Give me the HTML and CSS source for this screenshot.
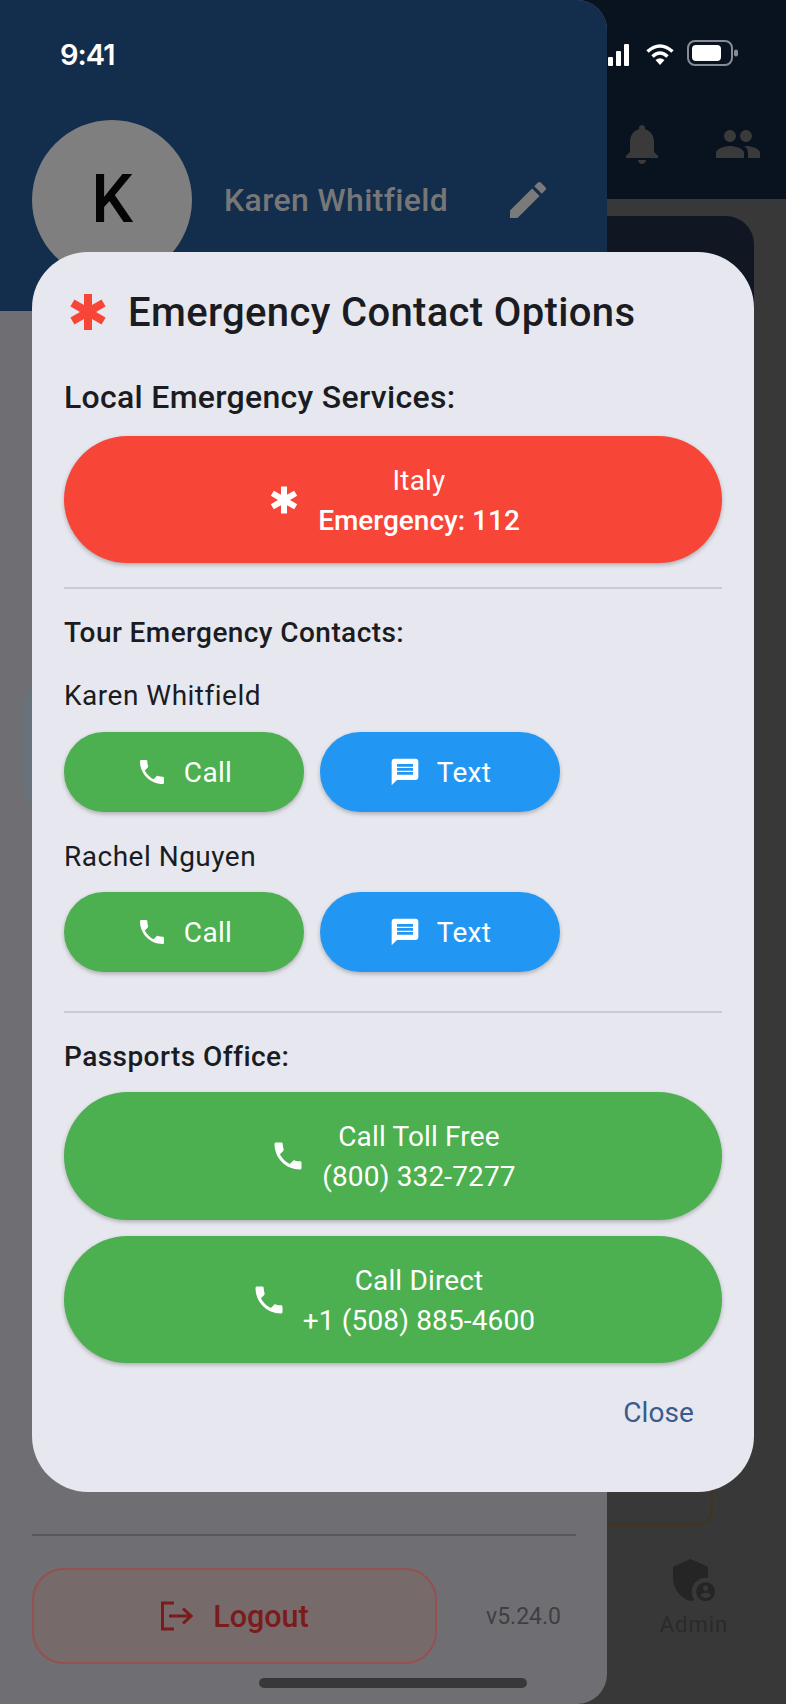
FILE: index.html
```html
<!DOCTYPE html>
<html lang="en">
<head>
<meta charset="utf-8">
<title>Emergency Contact Options</title>
<link rel="stylesheet" href="styles.css">
</head>
<body>
<div class="screen">
  <div class="app">
    <header class="appbar">
      <svg class="bar-icon" viewBox="0 0 24 24"><path d="M12 22c1.1 0 2-.9 2-2h-4c0 1.1.89 2 2 2zm6-6v-5c0-3.07-1.64-5.64-4.5-6.32V4c0-.83-.67-1.5-1.5-1.5s-1.5.67-1.5 1.5v.68C7.63 5.36 6 7.92 6 11v5l-2 2v1h16v-1l-2-2z"/></svg>
      <svg class="bar-icon" viewBox="0 0 24 24"><path d="M16 11c1.66 0 2.99-1.34 2.99-3S17.66 5 16 5c-1.66 0-3 1.34-3 3s1.34 3 3 3zm-8 0c1.66 0 2.99-1.34 2.99-3S9.66 5 8 5C6.34 5 5 6.34 5 8s1.34 3 3 3zm0 2c-2.33 0-7 1.17-7 3.5V19h14v-2.5c0-2.33-4.67-3.5-7-3.5zm8 0c-.29 0-.62.02-.97.05 1.16.84 1.97 1.97 1.97 3.45V19h6v-2.5c0-2.33-4.67-3.5-7-3.5z"/></svg>
    </header>
    <main class="app-body">
      <div class="panel">
        <div class="card-top"></div>
        <div class="card-gold"></div>
      </div>
      <nav class="nav-item">
        <svg class="admin-icon" viewBox="0 0 24 24"><path d="M17,11c0.34,0,0.67,0.04,1,0.09V6.27L10.5,3L3,6.27v4.91c0,4.54,3.2,8.79,7.5,9.82c0.55-0.13,1.08-0.32,1.6-0.55C11.41,19.47,11,18.28,11,17C11,13.69,13.69,11,17,11z"/><path d="M17,13c-2.21,0-4,1.79-4,4c0,2.21,1.79,4,4,4s4-1.79,4-4C21,14.79,19.21,13,17,13z M17,14.38c0.62,0,1.12,0.51,1.12,1.12s-0.51,1.12-1.12,1.12s-1.12-0.51-1.12-1.12S16.38,14.38,17,14.38z M17,19.75c-0.93,0-1.74-0.46-2.24-1.17c0.05-0.72,1.51-1.08,2.24-1.08s2.19,0.36,2.24,1.08C18.74,19.29,17.93,19.75,17,19.75z" fill-rule="evenodd"/></svg>
        <span class="admin-label">Admin</span>
      </nav>
    </main>
  </div>

  <aside class="drawer">
    <div class="drawer-head">
      <div class="avatar">K</div>
      <span class="drawer-name">Karen Whitfield</span>
      <svg class="edit-icon" viewBox="0 0 24 24"><path d="M3 17.25V21h3.75L17.81 9.94l-3.75-3.75L3 17.25zM20.71 7.04c.39-.39.39-1.02 0-1.41l-2.34-2.34c-.39-.39-1.02-.39-1.41 0l-1.83 1.83 3.75 3.75 1.83-1.83z"/></svg>
    </div>
    <div class="drawer-body">
      <div class="drawer-card"></div>
      <div class="drawer-foot">
        <div class="drawer-rule"></div>
        <div class="logout-row">
          <div class="logout">
            <svg class="logout-icon" viewBox="0 0 33 30"><path d="M14 2H2.500v26H14"/><path d="M9 15h22M23 7.500l8 7.500-8 7.500"/></svg>
            <span>Logout</span>
          </div>
          <span class="version">v5.24.0</span>
        </div>
      </div>
    </div>
  </aside>

  <div class="statusbar">
    <span class="clock">9:41</span>
    <div class="status-icons">
      <svg class="signal" viewBox="0 0 21 22"><rect x="0" y="13" width="5" height="9" rx="1"/><rect x="8" y="7" width="5" height="15" rx="1"/><rect x="16" y="0" width="5" height="22" rx="1"/></svg>
      <svg class="wifi" viewBox="0 0 28 21"><path class="wifi-arc" d="M1.500 7.500Q14-3.500 26.500 7.500"/><path class="wifi-arc" d="M6.500 12.500Q14 5.500 21.500 12.500"/><path class="wifi-dot" d="M9.500 16Q14 12.500 18.500 16L14 21z"/></svg>
      <svg class="battery" viewBox="0 0 51 26"><rect class="battery-shell" x="1" y="1" width="44" height="24" rx="7"/><rect class="battery-level" x="5" y="5" width="29" height="16" rx="4"/><rect class="battery-nub" x="47" y="9.500" width="4" height="7" rx="2"/></svg>
    </div>
  </div>

  <section class="dialog">
    <div class="dialog-title">
      <svg class="title-icon" viewBox="0 0 24 24"><path d="M20.79,9.23l-2-3.46L14,8.54V3h-4v5.54L5.21,5.770l-2,3.460L8,12l-4.790,2.770l2,3.460L10,15.460V21h4v-5.540l4.790,2.770l2-3.460L16,12L20.790,9.230z"/></svg>
      <h1>Emergency Contact Options</h1>
    </div>

    <h2 class="section-a">Local Emergency Services:</h2>
    <div class="wide-btn red gap-19">
      <svg class="wide-icon" viewBox="0 0 24 24"><path d="M20.79,9.23l-2-3.46L14,8.54V3h-4v5.54L5.21,5.770l-2,3.460L8,12l-4.790,2.770l2,3.460L10,15.460V21h4v-5.540l4.790,2.770l2-3.460L16,12L20.790,9.230z"/></svg>
      <div class="wide-text"><span>Italy</span><span class="strong">Emergency: 112</span></div>
    </div>

    <div class="rule rule-a"></div>

    <h3 class="section-b">Tour Emergency Contacts:</h3>
    <p class="person person-a">Karen Whitfield</p>
    <div class="pair pair-a">
      <div class="small-btn green">
        <svg class="small-icon" viewBox="0 0 24 24"><path d="M6.620 10.790c1.440 2.830 3.760 5.140 6.590 6.590l2.200-2.200c.27-.27.67-.36 1.020-.24 1.120.37 2.330.57 3.570.57.55 0 1 .45 1 1V20c0 .55-.45 1-1 1-9.390 0-17-7.610-17-17 0-.55.45-1 1-1h3.500c.55 0 1 .45 1 1 0 1.250.2 2.450.57 3.570.11.35.03.74-.25 1.020l-2.200 2.200z"/></svg>
        <span>Call</span>
      </div>
      <div class="small-btn blue">
        <svg class="small-icon" viewBox="0 0 24 24"><path d="M20 2H4c-1.100 0-1.990.9-1.990 2L2 22l4-4h14c1.100 0 2-.9 2-2V4c0-1.100-.9-2-2-2zm-2 12H6v-2h12v2zm0-3H6V9h12v2zm0-3H6V6h12v2z"/></svg>
        <span>Text</span>
      </div>
    </div>
    <p class="person person-b">Rachel Nguyen</p>
    <div class="pair pair-b">
      <div class="small-btn green">
        <svg class="small-icon" viewBox="0 0 24 24"><path d="M6.620 10.790c1.440 2.830 3.760 5.140 6.590 6.590l2.200-2.200c.27-.27.67-.36 1.020-.24 1.120.37 2.330.57 3.570.57.55 0 1 .45 1 1V20c0 .55-.45 1-1 1-9.390 0-17-7.610-17-17 0-.55.45-1 1-1h3.500c.55 0 1 .45 1 1 0 1.250.2 2.450.57 3.570.11.35.03.74-.25 1.020l-2.200 2.200z"/></svg>
        <span>Call</span>
      </div>
      <div class="small-btn blue">
        <svg class="small-icon" viewBox="0 0 24 24"><path d="M20 2H4c-1.100 0-1.990.9-1.990 2L2 22l4-4h14c1.100 0 2-.9 2-2V4c0-1.100-.9-2-2-2zm-2 12H6v-2h12v2zm0-3H6V9h12v2zm0-3H6V6h12v2z"/></svg>
        <span>Text</span>
      </div>
    </div>

    <div class="rule rule-b"></div>

    <h3 class="section-c">Passports Office:</h3>
    <div class="wide-btn green gap-15 tall">
      <svg class="wide-icon" viewBox="0 0 24 24"><path d="M6.620 10.790c1.440 2.830 3.760 5.140 6.590 6.590l2.200-2.200c.27-.27.67-.36 1.020-.24 1.120.37 2.330.57 3.570.57.55 0 1 .45 1 1V20c0 .55-.45 1-1 1-9.390 0-17-7.610-17-17 0-.55.45-1 1-1h3.500c.55 0 1 .45 1 1 0 1.250.2 2.450.57 3.570.11.35.03.74-.25 1.020l-2.200 2.200z"/></svg>
      <div class="wide-text"><span>Call Toll Free</span><span>(800) 332-7277</span></div>
    </div>
    <div class="wide-btn green gap-16">
      <svg class="wide-icon" viewBox="0 0 24 24"><path d="M6.620 10.790c1.440 2.830 3.760 5.140 6.590 6.590l2.200-2.200c.27-.27.67-.36 1.020-.24 1.120.37 2.330.57 3.570.57.55 0 1 .45 1 1V20c0 .55-.45 1-1 1-9.390 0-17-7.610-17-17 0-.55.45-1 1-1h3.500c.55 0 1 .45 1 1 0 1.250.2 2.450.57 3.570.11.35.03.74-.25 1.020l-2.200 2.200z"/></svg>
      <div class="wide-text"><span>Call Direct</span><span>+1 (508) 885-4600</span></div>
    </div>

    <div class="dialog-actions"><span class="close">Close</span></div>
  </section>

  <div class="home-indicator"></div>
</div>
</body>
</html>
```

FILE: styles.css
```css
* { box-sizing: border-box; }

html, body {
  margin: 0;
  padding: 0;
  background: #383839;
}

.screen {
  position: relative;
  width: 786px;
  height: 1704px;
  overflow: hidden;
  background: #383839;
  font-family: Roboto, "Liberation Sans", sans-serif;
}

/* dimmed page behind the drawer */
.app { display: flex; flex-direction: column; height: 100%; }

.appbar {
  height: 199px;
  flex: none;
  background: #08131f;
  display: flex;
  justify-content: flex-end;
  align-items: flex-start;
  gap: 48px;
  padding: 120px 24px 0 0;
}

.bar-icon { width: 48px; height: 48px; fill: #3a3a3b; }

.app-body { display: flex; flex-direction: column; align-items: flex-end; padding-top: 17px; }

.panel {
  width: 365px;
  height: 1326px;
  margin-right: 39px;
  display: flex;
  flex-direction: column;
  justify-content: space-between;
  padding-bottom: 17px;
  border-right: 1px solid #3a3a3b;
}

.card-top {
  width: 372px;
  height: 700px;
  background: #111722;
  border-radius: 28px;
}

.card-gold {
  width: 331px;
  height: 160px;
  border: 2px solid #46331b;
  border-radius: 16px;
}

.nav-item {
  width: 120px;
  margin: 10px 32px 0 0;
  display: flex;
  flex-direction: column;
  align-items: center;
}

.admin-icon { width: 56px; height: 56px; fill: #252526; }

.admin-label { font-size: 22px; line-height: 28px; letter-spacing: 1px; color: #2a2a2b; margin-top: 3px; }

/* drawer */
.drawer {
  position: absolute;
  left: 0;
  top: 0;
  width: 607px;
  height: 1704px;
  display: flex;
  flex-direction: column;
  background: #6f6f73;
  border-radius: 0 30px 30px 0;
  overflow: hidden;
}

.drawer-head {
  height: 311px;
  flex: none;
  background: #132d4c;
  display: flex;
  align-items: flex-start;
  padding: 120px 55px 0 32px;
}

.avatar {
  width: 160px;
  height: 160px;
  flex: none;
  border-radius: 50%;
  background: #7f7f7f;
  color: #050505;
  font-size: 66px;
  font-weight: 500;
  line-height: 160px;
  text-align: center;
}

.drawer-name {
  margin-left: 32px;
  font-size: 32px;
  font-weight: 500;
  line-height: 160px;
  letter-spacing: .35px;
  color: #777777;
}

.edit-icon { width: 48px; height: 48px; margin: 56px 0 0 auto; fill: #7a7a7a; }

.drawer-body { flex: 1; display: flex; flex-direction: column; justify-content: space-between; }

.drawer-card {
  width: 200px;
  height: 133px;
  margin: 369px 0 0 24px;
  background: #68727b;
  border-radius: 24px;
}

.drawer-foot { padding: 0 32px 40px; }

.drawer-rule { height: 2px; width: 544px; background: #58585c; }

.logout-row { display: flex; align-items: center; margin-top: 32px; }

.logout {
  width: 405px;
  height: 96px;
  display: flex;
  align-items: center;
  justify-content: center;
  gap: 20px;
  background: #776a6b;
  border: 2px solid #96504f;
  border-radius: 32px;
  color: #7a1b1c;
  font-size: 30.500px;
  font-weight: 500;
}

.logout-icon { width: 33px; height: 30px; fill: none; stroke: #7a1b1c; stroke-width: 3; }

.version { margin-left: 49px; font-size: 23px; color: #3f3f42; }

/* status bar */
.statusbar {
  position: absolute;
  left: 0;
  top: 0;
  width: 786px;
  display: flex;
  justify-content: space-between;
  align-items: flex-start;
  padding: 38px 48px 0 60px;
}

.clock { font-family: Inter, Roboto, sans-serif; font-size: 29px; line-height: 34px; font-weight: 600; color: #fff; letter-spacing: -1px; }

.status-icons { display: flex; align-items: center; gap: 17px; padding-top: 5px; }

.signal { width: 21px; height: 22px; fill: #fff; }
.wifi { width: 28px; height: 21px; }
.wifi-arc { fill: none; stroke: #fff; stroke-width: 3.500; }
.wifi-dot { fill: #fff; }
.battery { width: 51px; height: 26px; margin-top: -3px; margin-left: -4px; }
.battery-shell { fill: none; stroke: #878c94; stroke-width: 2; }
.battery-level { fill: #fff; }
.battery-nub { fill: #878c94; }

/* dialog */
.dialog {
  position: absolute;
  left: 32px;
  top: 252px;
  width: 722px;
  height: 1240px;
  padding: 36px 32px 0;
  background: #e7e8ef;
  border-radius: 56px;
  color: #1a1c22;
}

.dialog-title { display: flex; align-items: center; gap: 16px; height: 48px; }

.title-icon { width: 48px; height: 48px; fill: #f74537; flex: none; }

h1, h2, h3, p { margin: 0; }

h1 { font-size: 40px; line-height: 48px; font-weight: 500; letter-spacing: .35px; position: relative; top: 1px; }

h2, h3 { font-weight: 500; line-height: 40px; }

.section-a { font-size: 32px; margin-top: 41px; letter-spacing: .3px; }
.section-b { font-size: 28px; margin-top: 24px; letter-spacing: .42px; }
.section-c { font-size: 28px; margin-top: 24px; letter-spacing: .45px; }

.person { font-size: 28px; line-height: 40px; letter-spacing: .5px; }
.person-a { margin-top: 23px; }
.person-b { margin-top: 25px; }

.rule { height: 2px; background: #c8cad4; }
.rule-a { margin-top: 24px; }
.rule-b { margin-top: 39px; }

.wide-btn {
  height: 127px;
  display: flex;
  align-items: center;
  justify-content: center;
  gap: 16px;
  border-radius: 64px;
  color: #fff;
  box-shadow: 0 2px 4px rgba(0, 0, 0, .25);
}

.tall { height: 128px; }
.gap-19 { margin-top: 19px; }
.gap-15 { margin-top: 15px; }
.gap-16 { margin-top: 16px; }

.wide-icon { width: 36px; height: 36px; fill: #fff; flex: none; }

.wide-text { display: flex; flex-direction: column; align-items: center; padding-top: 2px; font-size: 28px; line-height: 40px; letter-spacing: .15px; }

.strong { font-weight: 500; letter-spacing: 0; }

.red { background: #f74537; }
.green { background: #4caf50; }
.blue { background: #2196f3; }

.pair { display: flex; gap: 16px; }
.pair-a { margin-top: 16px; }
.pair-b { margin-top: 15px; }

.small-btn {
  width: 240px;
  height: 80px;
  display: flex;
  align-items: center;
  justify-content: center;
  gap: 16px;
  border-radius: 40px;
  color: #fff;
  font-size: 28px;
  letter-spacing: .3px;
  box-shadow: 0 2px 4px rgba(0, 0, 0, .25);
}

.small-icon { width: 32px; height: 32px; fill: #fff; flex: none; }

.dialog-actions { display: flex; justify-content: flex-end; margin-top: 30px; padding-right: 28px; }

.close { font-size: 28px; line-height: 40px; color: #3b5a8e; letter-spacing: .1px; }

.home-indicator {
  position: absolute;
  left: 259px;
  top: 1678px;
  width: 268px;
  height: 10px;
  border-radius: 5px;
  background: #38383a;
}
```
